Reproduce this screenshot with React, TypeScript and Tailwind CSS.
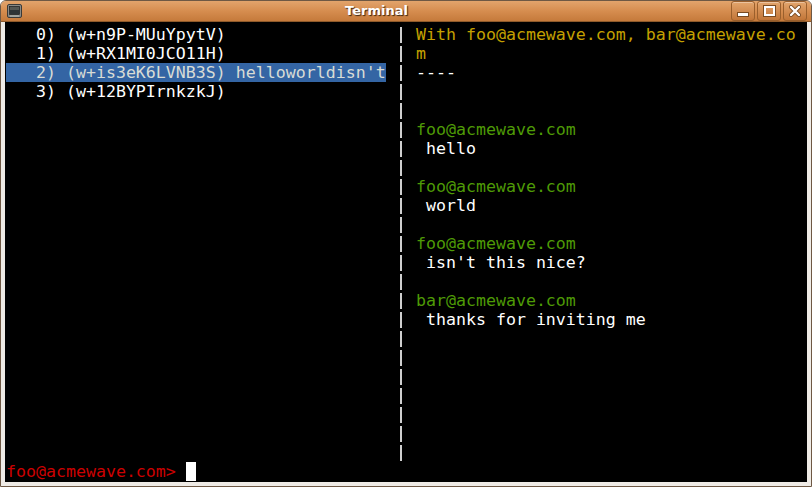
import type { ReactNode } from "react";

type Row = {
  left?: string;
  highlight?: boolean;
  right?: ReactNode;
};

const yellow = "text-[#c4a000]";
const green = "text-[#4e9a06]";

const rows: Row[] = [
  { left: "   0) (w+n9P-MUuYpytV)", right: <span className={yellow}>With foo@acmewave.com, bar@acmewave.co</span> },
  { left: "   1) (w+RX1MI0JCO11H)", right: <span className={yellow}>m</span> },
  { left: "   2) (w+is3eK6LVNB3S) helloworldisn't", highlight: true, right: "----" },
  { left: "   3) (w+12BYPIrnkzkJ)" },
  {},
  { right: <span className={green}>foo@acmewave.com</span> },
  { right: " hello" },
  {},
  { right: <span className={green}>foo@acmewave.com</span> },
  { right: " world" },
  {},
  { right: <span className={green}>foo@acmewave.com</span> },
  { right: " isn't this nice?" },
  {},
  { right: <span className={green}>bar@acmewave.com</span> },
  { right: " thanks for inviting me" },
  {},
  {},
  {},
  {},
  {},
  {},
  {},
];

function TerminalIcon() {
  return (
    <svg width="15" height="14" viewBox="0 0 15 14">
      <rect x="0.5" y="0.5" width="14" height="13" rx="1.5" fill="#8a8a86" stroke="#3a3a38" />
      <rect x="2.5" y="2.5" width="10" height="8" fill="#2e3436" stroke="#1a1a1a" strokeWidth="0.6" />
      <rect x="3" y="3" width="9" height="3" fill="#555753" />
      <rect x="3" y="11.5" width="9" height="1" fill="#babdb6" />
    </svg>
  );
}

function WinButton({ children }: { children: ReactNode }) {
  return (
    <div className="flex h-[20px] w-[24px] items-center justify-center rounded-[3px] border border-[#9a5f2c] bg-gradient-to-b from-[#e3a56c] to-[#c27638] shadow-[inset_0_1px_0_rgba(255,255,255,0.35)]">
      {children}
    </div>
  );
}

export default function App() {
  return (
    <div className="h-[487px] w-[812px] bg-white">
      <div className="flex h-full w-full flex-col overflow-hidden rounded-t-[6px] border border-[#6e5844] bg-[#efebe6]">
        <div className="flex h-[21px] shrink-0 items-center border-b border-[#8f5a2a] bg-gradient-to-b from-[#e2a46c] via-[#d68d4f] to-[#c57a3b] pl-[6px] pr-[4px]">
          <TerminalIcon />
          <div
            className="flex-1 text-center text-[13px] font-bold text-white"
            style={{ fontFamily: '"DejaVu Sans", sans-serif', textShadow: "1px 1px 1px #3b2410" }}
          >
            Terminal
          </div>
          <div className="flex gap-[2px]">
            <WinButton>
              <div className="mt-[7px] h-[3px] w-[10px] bg-white shadow-[0_0_0_1px_#7a4a20]" />
            </WinButton>
            <WinButton>
              <div className="h-[10px] w-[11px] border-2 border-white shadow-[0_0_0_1px_#7a4a20]" />
            </WinButton>
            <WinButton>
              <svg width="12" height="12" viewBox="0 0 12 12">
                <path d="M2 2 L10 10 M10 2 L2 10" stroke="#7a4a20" strokeWidth="4" strokeLinecap="round" />
                <path d="M2 2 L10 10 M10 2 L2 10" stroke="#ffffff" strokeWidth="2.4" strokeLinecap="round" />
              </svg>
            </WinButton>
          </div>
        </div>
        <div className="flex flex-1 px-[4px] pb-[4px]">
          <div
            className="flex-1 bg-black pl-[1px] pt-[3px] text-[16.6px] leading-[19px] text-white"
            style={{ fontFamily: '"DejaVu Sans Mono", monospace' }}
          >
            {rows.map((row, i) => (
              <div key={i} className="flex h-[19px] whitespace-pre">
                <span className={`w-[380px] ${row.highlight ? "bg-[#3465a4] text-[#d8dcd6]" : ""}`}>
                  {row.left ?? ""}
                </span>
                {/* column separator drawn as a line to keep it neutral grey */}
                <span className="flex w-[30px]">
                  <span className="ml-[14px] mt-[2px] h-[16px] w-[2px] bg-[#cfcfcf]" />
                </span>
                <span>{row.right ?? ""}</span>
              </div>
            ))}
            <div className="flex h-[19px] items-center whitespace-pre">
              <span className="text-[#cc0000]">foo@acmewave.com&gt; </span>
              <span className="inline-block h-[19px] w-[10px] bg-white" />
            </div>
          </div>
        </div>
      </div>
    </div>
  );
}
